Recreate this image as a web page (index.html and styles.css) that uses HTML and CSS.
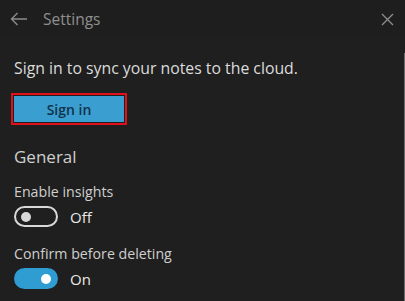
FILE: index.html
```html
<!DOCTYPE html>
<html lang="en">
<head>
    <meta charset="UTF-8">
    <title>Settings</title>
    <link rel="stylesheet" href="styles.css">
</head>
<body>

    <div class="panel">
        <div class="header">
            <svg class="back" width="18" height="14" viewBox="0 0 18 14">
                <path d="M17 7H1.5M7.5 1L1.5 7l6 6" fill="none" stroke="#8c8c8c" stroke-width="1.4"/>
            </svg>
            <span class="title">Settings</span>
            <svg class="close" width="13" height="13" viewBox="0 0 13 13">
                <path d="M1 1l11 11M12 1L1 12" stroke="#8c8c8c" stroke-width="1.4"/>
            </svg>
        </div>

        <div class="content">
            <p class="sync">Sign in to sync your notes to the cloud.</p>
            <div class="signin-wrap">
                <button class="signin">Sign in</button>
            </div>

            <h2 class="section">General</h2>

            <div class="setting">
                <div class="label">Enable insights</div>
                <div class="toggle-row">
                    <span class="toggle"><span class="knob"></span></span>
                    <span class="state">Off</span>
                </div>
            </div>

            <div class="setting">
                <div class="label">Confirm before deleting</div>
                <div class="toggle-row">
                    <span class="toggle on"><span class="knob"></span></span>
                    <span class="state">On</span>
                </div>
            </div>
        </div>

        <div class="scrollbar"></div>
    </div>

</body>
</html>
```

FILE: styles.css
```css
* {
    box-sizing: border-box;
    margin: 0;
    padding: 0;
    font-family: "Open Sans", "Liberation Sans", sans-serif;
}

body {
    background: #1f1f1f;
    width: 405px;
    height: 301px;
    overflow: hidden;
}

.panel {
    position: relative;
    height: 301px;
}

.header {
    display: flex;
    align-items: center;
    height: 38px;
    background: #1e1e1e;
    padding: 0 11px 0 10px;
}

.back {
    margin-right: 15px;
}

.title {
    flex: 1;
    font-size: 15.5px;
    color: #8f8f8f;
}

.content {
    padding: 21px 0 0 14px;
    color: #dcdcdc;
}

.sync {
    font-size: 15.8px;
    line-height: 18px;
}

.signin-wrap {
    margin: 16px 0 0 -3px;
    width: 116px;
    height: 32px;
    border: 2px solid #e0101c;
    padding: 1px;
    background: #1f1f1f;
}

.signin {
    width: 100%;
    height: 100%;
    border: none;
    background: #3a9ed0;
    color: #12324a;
    font-size: 14px;
    font-weight: 600;
}

.section {
    margin-top: 21px;
    font-size: 17px;
    font-weight: normal;
    color: #cfcfcf;
    line-height: 22px;
}

.setting {
    margin-top: 15px;
}

.setting + .setting {
    margin-top: 18px;
}

.label {
    font-size: 14.2px;
    line-height: 18px;
    color: #cfcfcf;
}

.toggle-row {
    display: flex;
    align-items: center;
    margin-top: 5px;
}

.toggle {
    display: flex;
    align-items: center;
    width: 44px;
    height: 21px;
    border: 2px solid #d8d8d8;
    border-radius: 11px;
    padding: 0 5px;
}

.knob {
    width: 10px;
    height: 10px;
    border-radius: 50%;
    background: #d8d8d8;
}

.toggle.on {
    background: #2f9cd2;
    border-color: #2f9cd2;
    justify-content: flex-end;
}

.toggle.on .knob {
    background: #fff;
}

.state {
    margin-left: 12px;
    font-size: 15px;
    color: #e8e8e8;
}

.scrollbar {
    position: absolute;
    right: 0;
    top: 53px;
    bottom: 0;
    width: 1px;
    background: #6c6c6c;
}
```
